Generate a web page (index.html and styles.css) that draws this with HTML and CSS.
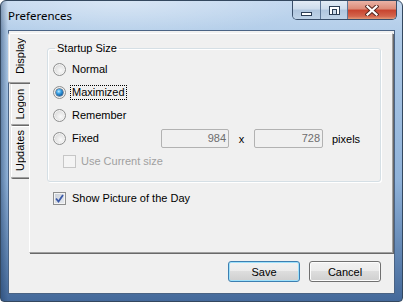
FILE: index.html
```html
<!DOCTYPE html>
<html lang="en">
<head>
    <meta charset="UTF-8">
    <title>Preferences</title>
    <link rel="stylesheet" href="styles.css">
</head>
<body>
    <div class="window">
        <div class="titlebar">
            <span class="title">Preferences</span>
            <div class="caption-btns">
                <span class="cap cap-min"><i class="glyph-min"></i></span>
                <span class="cap cap-max"><i class="glyph-max"></i></span>
                <span class="cap cap-close">
                    <svg width="14" height="11" viewBox="0 0 14 11">
                        <path d="M2.5 1.5 L11.5 9.5 M11.5 1.5 L2.5 9.5" stroke="#5a2a22" stroke-width="4.2" stroke-linecap="square"/>
                        <path d="M2.5 1.5 L11.5 9.5 M11.5 1.5 L2.5 9.5" stroke="#fff" stroke-width="2.2" stroke-linecap="square"/>
                    </svg>
                </span>
            </div>
        </div>
        <div class="client">
            <div class="tabctl">
                <div class="tabs">
                    <div class="tab tab-display active"><span>Display</span></div>
                    <div class="tab tab-logon"><span>Logon</span></div>
                    <div class="tab tab-updates"><span>Updates</span></div>
                </div>
                <div class="panel">
                    <fieldset class="group">
                        <legend>Startup Size</legend>
                        <div class="row">
                            <span class="radio"></span><span class="lbl">Normal</span>
                        </div>
                        <div class="row">
                            <span class="radio checked"></span><span class="lbl focus">Maximized</span>
                        </div>
                        <div class="row">
                            <span class="radio"></span><span class="lbl">Remember</span>
                        </div>
                        <div class="row">
                            <span class="fixed-opt"><span class="radio"></span><span class="lbl">Fixed</span></span>
                            <span class="num num-w">984</span>
                            <span class="times">x</span>
                            <span class="num num-h">728</span>
                            <span class="unit">pixels</span>
                        </div>
                        <div class="row sub-row">
                            <span class="check disabled"></span><span class="check-lbl disabled-text">Use Current size</span>
                        </div>
                    </fieldset>
                    <div class="row potd-row">
                        <span class="check checked">
                            <svg width="11" height="11" viewBox="0 0 11 11">
                                <path d="M2 5.5 L4.5 8.5 L9 2" fill="none" stroke="#3c5aa8" stroke-width="1.8"/>
                            </svg>
                        </span>
                        <span class="check-lbl">Show Picture of the Day</span>
                    </div>
                </div>
            </div>
            <div class="buttons">
                <button class="btn btn-default">Save</button>
                <button class="btn">Cancel</button>
            </div>
        </div>
    </div>
</body>
</html>
```

FILE: styles.css
```css
* {
    box-sizing: border-box;
}
body {
    margin: 0;
    width: 403px;
    height: 302px;
    overflow: hidden;
    background: #fff;
    font-family: "Liberation Sans", Arial, sans-serif;
    font-size: 11px;
    color: #000;
}
.window {
    width: 403px;
    height: 302px;
    border: 1px solid #34485f;
    border-radius: 6px 6px 4px 4px;
    display: flex;
    flex-direction: column;
    background:
        radial-gradient(ellipse 180px 40px at 120px 0, rgba(255, 255, 255, 0.35), rgba(255, 255, 255, 0)),
        linear-gradient(90deg, rgba(30, 60, 100, 0.45) 0, rgba(30, 60, 100, 0) 7px),
        linear-gradient(180deg, #c3d8ef 0, #aecae7 40px, #8fb2d9 180px, #44699a 100%);
}
.titlebar {
    height: 29px;
    display: flex;
    justify-content: space-between;
    align-items: flex-start;
}
.title {
    font-family: "Noto Sans", sans-serif;
    font-size: 11.5px;
    line-height: 16px;
    padding: 7px 0 0 7px;
    color: #000;
}
.caption-btns {
    display: flex;
    height: 19px;
    margin-right: 5px;
    border: 1px solid #3a4f6a;
    border-top: 0;
    border-radius: 0 0 5px 5px;
    overflow: hidden;
}
.cap {
    height: 18px;
    display: flex;
    align-items: center;
    justify-content: center;
}
.cap-min {
    width: 28px;
    border-right: 1px solid #5d7696;
    background: linear-gradient(#e2ebf5 0, #cddcec 45%, #b0c6de 50%, #bfd3e8 100%);
}
.cap-max {
    width: 27px;
    border-right: 1px solid #5d7696;
    background: linear-gradient(#e2ebf5 0, #cddcec 45%, #b0c6de 50%, #bfd3e8 100%);
}
.cap-close {
    width: 48px;
    background: linear-gradient(#eab3a6 0, #dc8a76 45%, #c8432e 50%, #d4654d 85%, #e39a78 100%);
}
.glyph-min {
    display: block;
    width: 11px;
    height: 4px;
    margin-top: 8px;
    border: 1px solid #2c3e55;
    background: #fff;
}
.glyph-max {
    display: block;
    width: 11px;
    height: 9px;
    border: 1px solid #2c3e55;
    background: #fff;
    padding: 2px 2px 1px;
}
.glyph-max::before {
    content: "";
    display: block;
    height: 100%;
    border: 1px solid #2c3e55;
    background: #c9d9ea;
}
.client {
    flex: 1;
    margin: 0 7px 7px 7px;
    border: 1px solid #4a6384;
    background: #f0f0f0;
    padding: 2px 1px 0 0;
    display: flex;
    flex-direction: column;
}
.tabctl {
    height: 220px;
    display: flex;
}
.tabs {
    width: 20px;
    display: flex;
    flex-direction: column;
}
.tab {
    margin-left: 2px;
    width: 18px;
    border-left: 1px solid #fff;
    border-top: 1px solid #fff;
    border-bottom: 1px solid #a0a0a0;
    border-radius: 2px 0 0 2px;
    box-shadow: 0 1px 0 #696969, -1px 0 0 #e3e3e3;
    display: flex;
    align-items: center;
    justify-content: center;
}
.tab span {
    writing-mode: vertical-rl;
    transform: rotate(180deg);
    line-height: 13px;
}
.tab-display {
    height: 50px;
    padding-bottom: 4px;
}
.tab.active {
    margin-left: 0;
    width: 21px;
    margin-right: -1px;
    position: relative;
    z-index: 1;
    background: #f0f0f0;
}
.tab-logon {
    height: 42px;
}
.tab-updates {
    height: 52px;
    margin-top: 1px;
    padding-bottom: 4px;
}
.panel {
    flex: 1;
    border-left: 1px solid #fff;
    border-top: 1px solid #fff;
    border-right: 1px solid #a0a0a0;
    border-bottom: 1px solid #a0a0a0;
    box-shadow: 1px 1px 0 #696969;
}
.group {
    margin: 8px 11px 0 17px;
    padding: 3px 0 8px 5px;
    border: 1px solid #d5dfe5;
    border-radius: 3px;
    box-shadow: inset 1px 1px 0 #fff, 1px 1px 0 #fff;
    min-width: 0;
}
.group legend {
    margin-left: 2px;
    padding: 0 2px;
    line-height: 13px;
}
.row {
    height: 23px;
    display: flex;
    align-items: center;
}
.radio {
    width: 13px;
    height: 13px;
    flex-shrink: 0;
    border-radius: 50%;
    border: 1px solid #8e8f8f;
    background: radial-gradient(circle at 60% 60%, #fafafa 0, #e6e6e6 45%, #cfcfcf 100%);
    box-shadow: inset 0 0 0 1px #f4f4f4;
    display: flex;
    align-items: center;
    justify-content: center;
}
.radio.checked::after {
    content: "";
    width: 7px;
    height: 7px;
    border-radius: 50%;
    background: radial-gradient(circle at 40% 35%, #c2ecff 0, #3aa2e6 35%, #0c5a9e 75%, #063c72 100%);
    box-shadow: 0 0 0 0.5px #1d3a5c;
}
.lbl {
    margin-left: 4px;
    padding: 0 1px;
    border: 1px dotted transparent;
    line-height: 13px;
}
.lbl.focus {
    border-color: #000;
}
.fixed-opt {
    width: 108px;
    display: flex;
    align-items: center;
}
.num {
    height: 19px;
    border: 1px solid #b2b2b2;
    border-radius: 2px;
    background: #f0f0f0;
    color: #6d6d6d;
    text-align: right;
    padding-right: 2px;
    line-height: 17px;
}
.num-w {
    width: 68px;
}
.num-h {
    width: 69px;
}
.times {
    width: 25px;
    text-align: center;
}
.unit {
    margin-left: 9px;
}
.sub-row {
    padding-left: 10px;
}
.check {
    width: 13px;
    height: 13px;
    flex-shrink: 0;
    border: 1px solid #8e8f8f;
    background: linear-gradient(135deg, #d6dbe2 0, #f6f7f9 100%);
    box-shadow: inset 0 0 0 1px #f4f4f4;
    display: flex;
    align-items: center;
    justify-content: center;
}
.check.disabled {
    border-color: #c6c6c6;
    background: #f4f4f4;
    box-shadow: none;
}
.check.checked {
    background: linear-gradient(135deg, #c9cfd8 0, #e9ecf1 100%);
}
.check-lbl {
    margin-left: 5px;
    line-height: 13px;
}
.disabled-text {
    color: #a0a0a0;
}
.potd-row {
    margin: 5px 0 0 23px;
}
.potd-row .check-lbl {
    margin-left: 6px;
}
.buttons {
    display: flex;
    justify-content: flex-end;
    gap: 9px;
    margin-top: 8px;
    padding-right: 12px;
}
.btn {
    width: 72px;
    height: 21px;
    padding: 0;
    border: 1px solid #707070;
    border-radius: 3px;
    background: linear-gradient(#f2f2f2 0, #ebebeb 50%, #dddddd 50%, #cfcfcf 100%);
    box-shadow: inset 0 0 0 1px #fcfcfc;
    font-family: "Liberation Sans", Arial, sans-serif;
    font-size: 11px;
    color: #000;
}
.btn-default {
    border-color: #3c7fb1;
    box-shadow: inset 0 0 0 1px #9fe1fb;
}
```
